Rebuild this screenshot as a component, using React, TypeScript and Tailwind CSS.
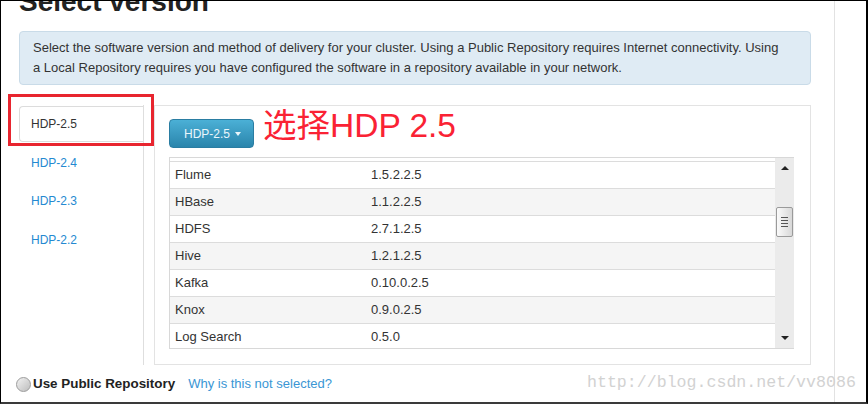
const rows = [
  { name: "Flume", version: "1.5.2.2.5" },
  { name: "HBase", version: "1.1.2.2.5" },
  { name: "HDFS", version: "2.7.1.2.5" },
  { name: "Hive", version: "1.2.1.2.5" },
  { name: "Kafka", version: "0.10.0.2.5" },
  { name: "Knox", version: "0.9.0.2.5" },
  { name: "Log Search", version: "0.5.0" },
];

const versions = ["HDP-2.4", "HDP-2.3", "HDP-2.2"];

function ScrollBar() {
  return (
    <div className="flex w-[19px] flex-col bg-[#ebebeb]">
      <div className="flex h-[20px] items-center justify-center">
        <div className="h-0 w-0 border-x-[4px] border-b-[4px] border-x-transparent border-b-[#222]" />
      </div>
      <div className="h-[29px]" />
      <div className="mx-[1px] flex h-[30px] flex-col items-center justify-center gap-[2px] rounded-[2px] border border-[#9a9a9a] bg-gradient-to-r from-[#fafafa] to-[#d8d8d8]">
        <div className="h-px w-[7px] bg-[#555]" />
        <div className="h-px w-[7px] bg-[#555]" />
        <div className="h-px w-[7px] bg-[#555]" />
        <div className="h-px w-[7px] bg-[#555]" />
      </div>
      <div className="flex-1" />
      <div className="flex h-[20px] items-center justify-center">
        <div className="h-0 w-0 border-x-[4px] border-t-[4px] border-x-transparent border-t-[#222]" />
      </div>
    </div>
  );
}

export default function App() {
  return (
    <div className="relative flex h-[404px] w-[868px] overflow-hidden border-b-2 border-l border-r-2 border-t border-b-[#3a3a3a] border-l-black border-r-black border-t-black bg-white font-['Liberation_Sans',Arial,sans-serif] text-[#333]">
      <div className="h-full w-[834px] shrink-0 border-r border-[#e2e2e2] pl-[18px] pr-[23px]">
        <h1 className="mt-[-13px] text-[28px] font-bold leading-[28px] text-[#222]">Select version</h1>

        <div className="mt-[15px] rounded-[4px] border border-[#c9dbe8] bg-[#dfebf4] py-[6px] pl-[13px] text-[13px] leading-[20px] whitespace-nowrap text-[#333]">
          Select the software version and method of delivery for your cluster. Using a Public Repository requires Internet connectivity. Using
          <br />
          a Local Repository requires you have configured the software in a repository available in your network.
        </div>

        <div className="mt-[20px] flex gap-[10px]">
          <div className="flex w-[125px] flex-col gap-[2.5px] border-r border-[#dedede]">
            <div className="mt-[1px] flex h-[36px] items-center rounded-l-[4px] border border-r-0 border-[#dcdcdc] bg-white pl-[11px] text-[12px] text-[#333]">
              HDP-2.5
            </div>
            {versions.map((v) => (
              <div key={v} className="flex h-[36px] items-center pl-[12px] text-[12px] text-[#2489d1]">
                {v}
              </div>
            ))}
          </div>

          <div className="flex-1 border border-[#e3e3e3] pb-[15px] pl-[14px] pr-[16px] pt-[13px]">
            <div className="flex items-start">
              <button className="flex h-[29px] w-[85px] items-center rounded-[4px] border border-[#2a7da2] bg-gradient-to-b from-[#4bb0d6] to-[#2a85ac] pl-[14px] text-[12px] text-[#eaf6fb]">
                HDP-2.5
                <span className="ml-[5px] h-0 w-0 border-x-[3.5px] border-t-[4px] border-x-transparent border-t-[#eaf6fb]" />
              </button>
              <span className="ml-[9px] mt-[-10px] text-[33.5px] leading-[33px] text-[#fa2234] font-['Liberation_Sans','Noto_Sans_CJK_SC',sans-serif]">
                选择HDP 2.5
              </span>
            </div>

            <div className="mt-[9px] flex h-[192px] overflow-hidden border-y border-l border-[#d8d8d8]">
              <div className="flex-1 pt-[3px]">
                <div className="border-t border-[#dcdcdc]">
                  {rows.map((r, i) => (
                    <div
                      key={r.name}
                      className={`grid h-[27px] grid-cols-[196px_1fr] items-center border-b border-[#dcdcdc] pl-[5px] text-[13px] text-[#333] ${i % 2 === 1 ? "bg-[#f5f5f5]" : "bg-white"}`}
                    >
                      <span>{r.name}</span>
                      <span>{r.version}</span>
                    </div>
                  ))}
                </div>
              </div>
              <ScrollBar />
            </div>
          </div>
        </div>

        <div className="mt-[9px] flex items-center">
          <span className="ml-[-3px] h-[15px] w-[15px] rounded-full border border-[#9c9c9c] bg-gradient-to-br from-[#f2f2f2] to-[#bdbdbd]" />
          <span className="ml-[2px] text-[13.4px] font-bold text-[#222]">Use Public Repository</span>
          <span className="ml-[13px] text-[13px] text-[#3a96d4]">Why is this not selected?</span>
        </div>
      </div>

      <div className="pointer-events-none absolute left-[7px] top-[93px] h-[52px] w-[146px] border-[3px] border-[#e8252f]" />

      <div className="pointer-events-none absolute left-[586px] top-[371px] font-['Liberation_Mono',monospace] text-[16.6px] leading-[22px] text-[#d2d2d2]">
        http://blog.csdn.net/vv8086
      </div>
    </div>
  );
}
